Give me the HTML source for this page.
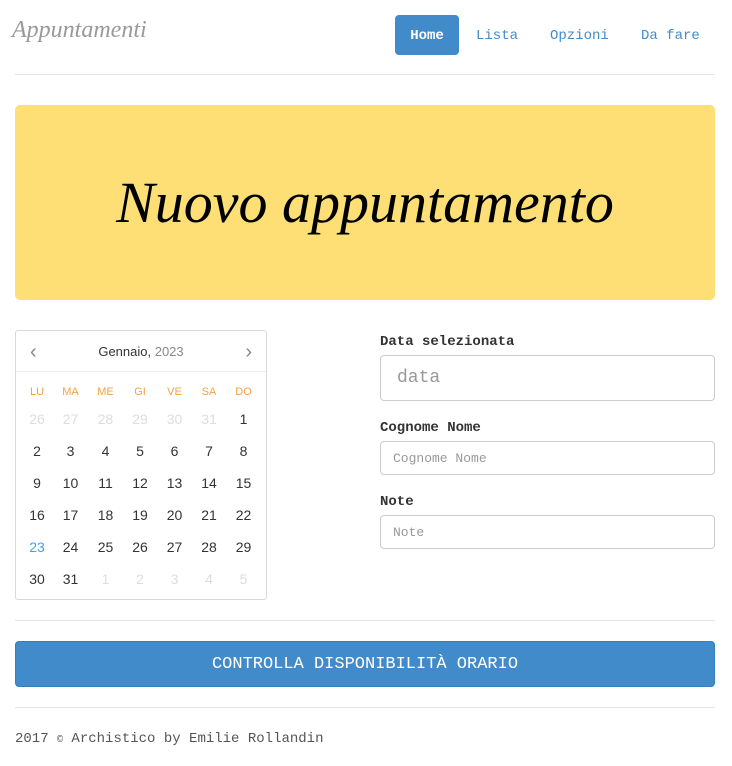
<!DOCTYPE html>
<html><head><meta charset="utf-8"><style>
*{box-sizing:border-box;margin:0;padding:0}
body{width:732px;height:766px;background:#fff;font-family:"Liberation Mono",monospace;position:relative;overflow:hidden;color:#333}
.abs{position:absolute}
.logo{left:12px;top:17px;font-family:"Liberation Serif",serif;font-style:italic;font-size:24px;color:#999}
.nav a{position:absolute;top:15px;height:40px;line-height:42px;font-size:14px;color:#428bca;text-decoration:none}
.hr{position:absolute;left:15px;width:700px;height:1px;background:#e5e5e5}
.hero{left:15px;top:105px;width:700px;height:195px;background:#fddf76;border-radius:5px;text-align:center;line-height:195px;font-family:"Liberation Serif",serif;font-style:italic;font-size:58px;color:#000}
.cal{left:15px;top:330px;width:252px;height:270px;border:1px solid #d9d9d9;border-radius:3px;font-family:"Liberation Sans",sans-serif}
.cal .h{height:41px;border-bottom:1px solid #eee;text-align:center;line-height:42px;font-size:13px;color:#333}
.cal .h span{color:#888}
.arr{position:absolute;top:0;line-height:42px;font-size:20px;color:#888}
.d{position:absolute;width:34px;text-align:center;font-size:14px;color:#333;font-family:"Liberation Sans",sans-serif}
.dh{font-size:11px;color:#f5a040}
.g{color:#ddd}
label{position:absolute;left:380px;font-weight:bold;font-size:14px;color:#333}
.in{position:absolute;left:380px;width:335px;border:1px solid #ccc;border-radius:4px;color:#999;padding-left:12px}
.btn{left:15px;top:641px;width:700px;height:46px;background:#428bca;border:1px solid #357ebd;border-radius:4px;color:#fff;text-align:center;line-height:46px;font-size:17px}
.foot{left:15px;top:731px;font-size:14px;color:#555}
</style></head><body>
<div class="abs logo">Appuntamenti</div>
<div class="nav">
<a style="left:395px;width:64px;background:#428bca;color:#fff;border-radius:4px;text-align:center;font-weight:bold">Home</a>
<a style="left:476px">Lista</a>
<a style="left:550px">Opzioni</a>
<a style="left:641px">Da fare</a>
</div>
<div class="hr" style="top:74px"></div>
<div class="abs hero">Nuovo appuntamento</div>
<div class="abs cal">
<div class="h">Gennaio, <span>2023</span></div>
<div class="arr" style="left:14px">&#8249;</div>
<div class="arr" style="right:14px">&#8250;</div>
</div>
<div id="days"></div>
<label style="top:334px">Data selezionata</label>
<div class="in" style="top:355px;height:46px;line-height:44px;font-size:18px;padding-left:16px">data</div>
<label style="top:420px">Cognome Nome</label>
<div class="in" style="top:441px;height:34px;line-height:34px;font-size:13px">Cognome Nome</div>
<label style="top:494px">Note</label>
<div class="in" style="top:515px;height:34px;line-height:34px;font-size:13px">Note</div>
<div class="hr" style="top:620px"></div>
<div class="abs btn">CONTROLLA DISPONIBILITÀ ORARIO</div>
<div class="hr" style="top:707px"></div>
<div class="abs foot">2017 <span style="font-size:10px">©</span> Archistico by Emilie Rollandin</div>
<script>
var cx=[37,70.5,105.5,140,174.5,209,243.5],h="";
var dh=["LU","MA","ME","GI","VE","SA","DO"];
dh.forEach(function(t,i){h+='<div class="d dh" style="left:'+(cx[i]-17)+'px;top:386px">'+t+'</div>';});
var rows=[[26,27,28,29,30,31,1],[2,3,4,5,6,7,8],[9,10,11,12,13,14,15],[16,17,18,19,20,21,22],[23,24,25,26,27,28,29],[30,31,1,2,3,4,5]];
rows.forEach(function(r,ri){r.forEach(function(n,i){var c="";if(ri==0&&i<6||ri==5&&i>1)c=" g";var st=(ri==4&&i==0)?"color:#3ba7e0;":"";
h+='<div class="d'+c+'" style="'+st+'left:'+(cx[i]-17)+'px;top:'+(411+ri*32)+'px">'+n+'</div>';});});
document.getElementById("days").innerHTML=h;
</script>
</body></html>
